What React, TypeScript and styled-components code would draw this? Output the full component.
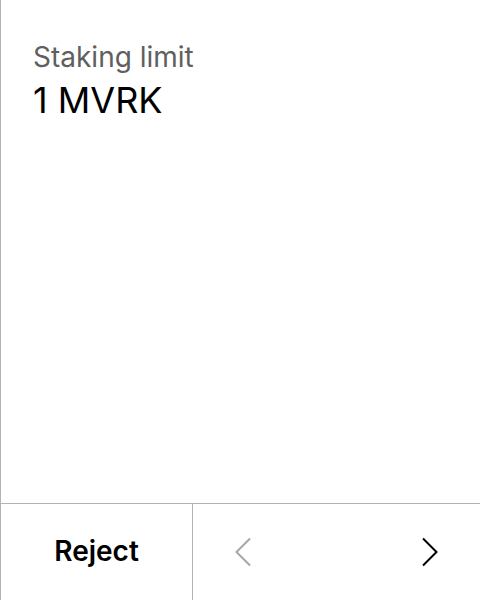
import React from "react";
import styled, { createGlobalStyle } from "styled-components";

const GlobalStyle = createGlobalStyle`
  html, body {
    margin: 0;
    padding: 0;
    background: #ffffff;
  }
  body {
    font-family: "Inter", "Noto Sans", sans-serif;
  }
`;

const Screen = styled.div`
  width: 480px;
  height: 600px;
  box-sizing: border-box;
  border-left: 1px solid #b3b3b3;
  display: flex;
  flex-direction: column;
  background: #ffffff;
`;

const Content = styled.div`
  flex: 1;
  padding: 40px 32px 0;
`;

const Label = styled.div`
  font-size: 28px;
  line-height: 34px;
  color: #5f5f5f;
`;

const Value = styled.div`
  font-size: 36px;
  line-height: 44px;
  color: #000000;
  margin-top: 4px;
`;

const Footer = styled.div`
  height: 96px;
  border-top: 1px solid #b3b3b3;
  display: grid;
  grid-template-columns: 192px 1fr;
`;

const RejectButton = styled.button`
  border: none;
  border-right: 1px solid #b3b3b3;
  background: transparent;
  font-family: "Inter", "Noto Sans", sans-serif;
  font-size: 28px;
  font-weight: 600;
  color: #000000;
  cursor: pointer;
  padding: 0 0 2px;
`;

const Nav = styled.div`
  display: flex;
  align-items: center;
  justify-content: space-between;
  padding: 0 41px 0 41px;
`;

const NavButton = styled.button<{ $disabled?: boolean }>`
  border: none;
  background: transparent;
  padding: 0;
  display: flex;
  color: ${(p) => (p.$disabled ? "#a6a6a6" : "#000000")};
  cursor: ${(p) => (p.$disabled ? "default" : "pointer")};
`;

const Chevron: React.FC<{ dir: "left" | "right" }> = ({ dir }) => (
  <svg width="18" height="30" viewBox="0 0 18 30" fill="none">
    <polyline
      points={dir === "left" ? "16,1.5 2.5,15 16,28.5" : "2,1.5 15.5,15 2,28.5"}
      stroke="currentColor"
      strokeWidth="2"
    />
  </svg>
);

const App: React.FC = () => {
  return (
    <>
      <GlobalStyle />
      <Screen>
        <Content>
          <Label>Staking limit</Label>
          <Value>1 MVRK</Value>
        </Content>
        <Footer>
          <RejectButton>Reject</RejectButton>
          <Nav>
            <NavButton $disabled>
              <Chevron dir="left" />
            </NavButton>
            <NavButton>
              <Chevron dir="right" />
            </NavButton>
          </Nav>
        </Footer>
      </Screen>
    </>
  );
};

export default App;
